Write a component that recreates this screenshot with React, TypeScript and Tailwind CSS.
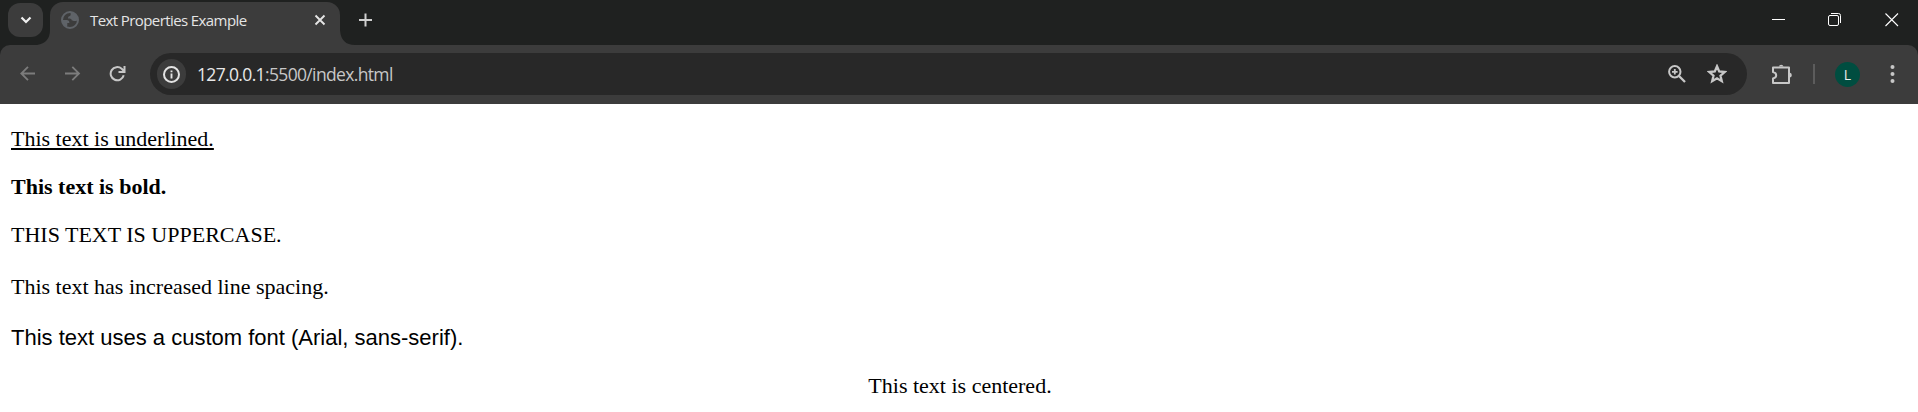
import type { ReactNode } from "react";

function TitleBar() {
  return (
    <div className="flex h-[45px] bg-[#1f2120]">
      <div className="mt-[3px] ml-2 flex h-[34px] w-[35px] items-center justify-center rounded-[12px] bg-[#3c3c3c]">
        <svg width="12" height="8" viewBox="0 0 12 8" fill="none" stroke="#f1f1f1" strokeWidth="2.2">
          <path d="M1.5 1.5 L6 6 L10.5 1.5" />
        </svg>
      </div>
      <svg className="mt-[30px] -ml-[6px]" width="13" height="15" viewBox="0 0 13 15">
        <path d="M13 0 V15 H0 Q13 13 13 0Z" fill="#3c3c3c" />
      </svg>
      <div className="mt-[2px] flex h-[43px] w-[290px] items-start rounded-t-[13px] bg-[#3c3c3c]">
        <svg className="mt-[9px] ml-[11px] shrink-0" width="18" height="18" viewBox="0 0 18 18">
          <circle cx="9" cy="9" r="8" fill="none" stroke="#5f6368" strokeWidth="2" />
          <path
            d="M10 1 C9 3 10.5 3.5 9 5 C7.5 5 7 6 7 7.5 C9 7.3 10.8 7.8 10.8 9.5 C12.5 9.8 13 10.5 16.7 9.5 L17 7 L14 2.5Z M1 9 H6 C8 9.3 8.5 10.5 8.3 12 H6.3 V14.5 L5.5 16 L2 13Z"
            fill="#5f6368"
          />
        </svg>
        <span className="mt-[7px] ml-[11px] w-[200px] shrink-0 whitespace-nowrap font-['Open_Sans',sans-serif] text-[15px] leading-[22px] tracking-[-0.59px] text-[#e5e5e5]">
          Text Properties Example
        </span>
        <svg className="mt-[12px] ml-[24px] shrink-0" width="12" height="12" viewBox="0 0 12 12" stroke="#e5e5e5" strokeWidth="1.9">
          <path d="M1.5 1.5 L10.5 10.5 M10.5 1.5 L1.5 10.5" />
        </svg>
      </div>
      <svg className="mt-[30px]" width="15" height="15" viewBox="0 0 15 15">
        <path d="M0 0 Q1 15 15 15 H0Z" fill="#3c3c3c" />
      </svg>
      <svg className="mt-[13px] ml-[4px]" width="14" height="14" viewBox="0 0 14 14" stroke="#d0d0d0" strokeWidth="2">
        <path d="M6.5 0.5 V13.5 M0 7 H13" />
      </svg>
      <div className="mr-[19px] ml-auto flex">
        <svg className="mt-[13px]" width="14" height="14" viewBox="0 0 14 14">
          <path d="M0 6.5 H13" stroke="#fff" />
        </svg>
        <svg className="mt-[13px] ml-[42px]" width="14" height="14" viewBox="0 0 14 14" fill="none" stroke="#fff">
          <rect x="0.5" y="2.5" width="10" height="10" rx="1.5" />
          <path d="M3 0.5 H10.5 Q12.5 0.5 12.5 2.5 V10" />
        </svg>
        <svg className="mt-[13px] ml-[43px]" width="14" height="14" viewBox="0 0 14 14" stroke="#fff" strokeWidth="1.1">
          <path d="M0.5 0.5 L13 13 M13 0.5 L0.5 13" />
        </svg>
      </div>
    </div>
  );
}

function Toolbar() {
  return (
    <div className="bg-[#1f2120]">
      <div className="flex h-[59px] items-center rounded-t-[10px] bg-[#3c3c3c] pb-px pl-[20px]">
        <svg width="16" height="16" viewBox="0 0 16 16" fill="none" stroke="#7c7c7c" strokeWidth="1.8">
          <path d="M15 7.5 H1.5 M8 0.8 L1.3 7.5 L8 14.2" />
        </svg>
        <svg className="ml-[29px]" width="16" height="16" viewBox="0 0 16 16" fill="none" stroke="#7c7c7c" strokeWidth="1.8">
          <path d="M0 7.5 H13.5 M7.3 0.8 L14 7.5 L7.3 14.2" />
        </svg>
        <svg className="ml-[28px]" width="18" height="18" viewBox="0.5 0 18 18" fill="none" stroke="#c7c7c7" strokeWidth="2">
          <path d="M15.2 10.2 A6.6 6.6 0 1 1 13.2 3.8 L15.6 6.2 M16 1 V6.9 H10" />
        </svg>
        <div className="ml-[23px] flex h-[42px] w-[1597px] items-center rounded-full bg-[#282828] pl-[7px]">
          <div className="flex h-[30px] w-[29px] items-center justify-center rounded-full bg-[#3c3c3c]">
            <svg width="17" height="17" viewBox="0 0 17 17" fill="none" stroke="#e3e3e3">
              <circle cx="8.5" cy="8.5" r="7.5" strokeWidth="2" />
              <path d="M8.5 7.5 V12.5 M8.5 4.5 V6.3" strokeWidth="1.9" />
            </svg>
          </div>
          <span className="ml-[11px] whitespace-nowrap font-['Open_Sans',sans-serif] text-[17.5px] leading-6 tracking-[-0.65px] text-[#c7c7c7]">
            <span className="text-[#e8e8e8]">127.0.0.1</span>:5500/index.html
          </span>
          <svg className="ml-auto" width="18" height="18" viewBox="0 0 18 18" fill="none" stroke="#c7c7c7">
            <circle cx="6.8" cy="6.8" r="5.7" strokeWidth="2" />
            <path d="M11 11 L17 17" strokeWidth="2.3" />
            <path d="M6.8 4 V9.6 M4 6.8 H9.6" strokeWidth="1.8" />
          </svg>
          <svg className="mr-[20px] ml-[21px]" width="20" height="20" viewBox="0 0 20 20" fill="none" stroke="#c7c7c7" strokeWidth="2.3">
            <path d="M10 2.3 L12.2 7.5 L17.8 8 L13.5 11.7 L14.8 17.2 L10 14.3 L5.2 17.2 L6.5 11.7 L2.2 8 L7.8 7.5Z" />
          </svg>
        </div>
        <svg className="ml-[25px]" width="21" height="22" viewBox="0 0 21 22" fill="none" stroke="#c7c7c7" strokeWidth="2">
          <path d="M1 4.5 H17 V20 H1 V15.5 Q4.2 14.6 4.2 12.2 Q4.2 9.8 1 9 Z" strokeLinejoin="round" />
          <path d="M6.8 3.6 A2.5 2.5 0 0 1 11.6 3.6Z M18 9.8 A2.5 2.5 0 0 1 18 14.6Z" fill="#c7c7c7" stroke="none" />
        </svg>
        <div className="ml-[20px] h-5 w-[2px] bg-[#5c5c5c]" />
        <div className="ml-[20px] flex size-[25px] items-center justify-center rounded-full bg-[#004d40] font-['Open_Sans',sans-serif] text-[14px] text-[#eeeeee]">
          L
        </div>
        <svg className="ml-[30px]" width="5" height="18" viewBox="0 0 5 18" fill="#c7c7c7">
          <circle cx="2.5" cy="2" r="2" />
          <circle cx="2.5" cy="9" r="2" />
          <circle cx="2.5" cy="16" r="2" />
        </svg>
      </div>
    </div>
  );
}

function Line({ className, children }: { className: string; children: ReactNode }) {
  return <p className={className}>{children}</p>;
}

export default function App() {
  return (
    <div className="flex h-[412px] w-full flex-col overflow-hidden bg-white">
      <TitleBar />
      <Toolbar />
      <main className="flex flex-col gap-[22px] px-[11px] pt-[22px] font-['Liberation_Serif',serif] text-[22px] leading-[26px] text-black">
        <Line className="underline decoration-2 underline-offset-2 [text-decoration-skip-ink:none]">This text is underlined.</Line>
        <Line className="font-bold">This text is bold.</Line>
        <Line className="uppercase">This text is uppercase.</Line>
        <Line className="leading-[33px]">This text has increased line spacing.</Line>
        <Line className="font-['Liberation_Sans',sans-serif]">This text uses a custom font (Arial, sans-serif).</Line>
        <Line className="pl-[2px] text-center">This text is centered.</Line>
      </main>
    </div>
  );
}
